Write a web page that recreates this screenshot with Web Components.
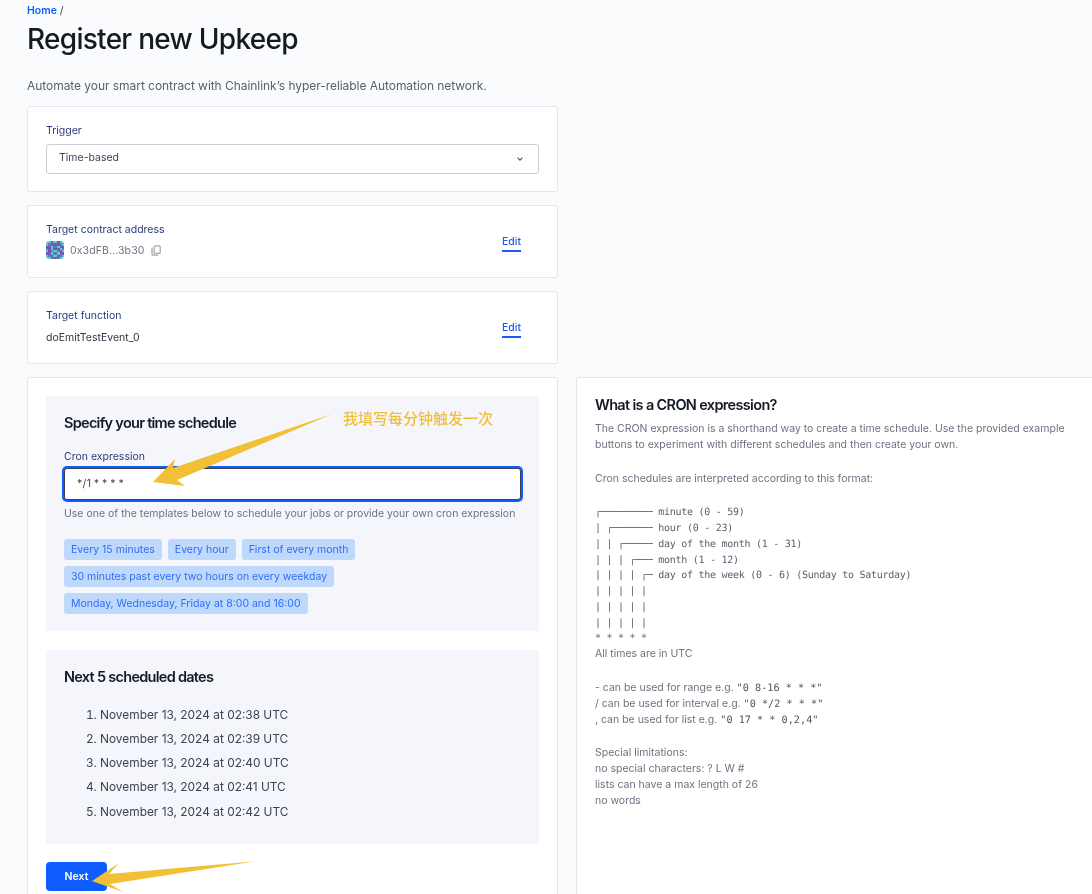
<!DOCTYPE html>
<html lang="en">
<head>
<meta charset="utf-8">
<title>Register new Upkeep</title>
<style>
html,body{margin:0;padding:0;height:894px;overflow:hidden;background:#fafbfd;}
body{font-family:Inter,"Liberation Sans",sans-serif;color:#141a24;position:relative;}
</style>
</head>
<body>
<upkeep-page></upkeep-page>
<note-overlay></note-overlay>
<script>
function def(name, css, html, setup){
  customElements.define(name, class extends HTMLElement{
    constructor(){super();const r=this.attachShadow({mode:'open'});r.innerHTML='<style>'+css+'</style>'+html;}
    connectedCallback(){ if(setup) setup(this); }
  });
}
def('ui-card',`:host{display:block;background:#fff;border:1px solid #e3e6ed;border-radius:3px;padding:17px 18px 17px;box-sizing:border-box}`,`<slot></slot>`);
def('field-label',`:host{display:block;font-size:10.5px;line-height:14px;color:#2b3a78}`,`<slot></slot>`);
def('select-box',`:host{display:flex;align-items:center;justify-content:space-between;height:30px;box-sizing:border-box;margin-top:6px;padding:0 12px 3px;background:#fff;border:1px solid #c9ced9;border-radius:3px;font-size:10.5px;color:#3c4350}
svg{display:block;margin:3px 3px 0 0}`,`<slot></slot><svg width="6" height="4" viewBox="0 0 6 4" fill="none" stroke="#4a5160" stroke-width="1.1"><path d="M.6.6 3 3.1 5.4.6"/></svg>`);
def('edit-row',`:host{display:flex;align-items:center;justify-content:space-between}
a{font-size:10.5px;font-weight:500;line-height:14px;color:#1a5cf5;border-bottom:2px solid #1a5cf5;padding-bottom:1px;margin-right:18px;margin-top:5px}`,`<div><slot></slot></div><a>Edit</a>`);
def('block-avatar',`:host{display:block;width:18px;height:18px}
svg{display:block;border-radius:3px}`,`<svg width="18" height="18" viewBox="0 0 8 8" shape-rendering="crispEdges"></svg>`,el=>{
  const rows=['ttpttptt','tbppppbt','pptbbtpp','bptppptb','tpbttbpt','pptbbtpp','tbpttpbt','ttbppbtt'];
  const c={t:'#5ccbc9',p:'#7355bb',b:'#4a86b8'};
  el.shadowRoot.querySelector('svg').innerHTML=rows.map((r,y)=>[...r].map((k,x)=>`<rect x="${x}" y="${y}" width="1" height="1" fill="${c[k]}"/>`).join('')).join('');
});
def('address-row',`:host{display:flex;align-items:center;margin-top:4px;height:18px;font-size:10.5px;letter-spacing:.1px;color:#6b7280}
span{margin-left:6px}svg{margin-left:7px;display:block}`,`<block-avatar></block-avatar><span><slot></slot></span><svg width="10" height="11" viewBox="0 0 10 11" fill="none" stroke="#a3a8b2" stroke-width="1.3"><rect x="3.2" y=".8" width="6" height="7.6" rx="1"/><path d="M1 2.6V9c0 .7.5 1.2 1.2 1.2h5"/></svg>`);
def('fn-value',`:host{display:block;margin-top:8px;font-size:10.5px;line-height:14px;color:#2f3540}`,`<slot></slot>`);
def('cron-input',`:host{display:block;height:32px;box-sizing:border-box;margin-top:4px;background:#fff;border:1px solid #3c4350;border-radius:3px;box-shadow:0 0 0 2px #0f5cff;padding:0 12px;font-size:10.5px;line-height:29px;color:#3c4350;letter-spacing:.3px;word-spacing:-.6px}`,`<slot></slot>`);
def('time-chip',`:host{display:inline-flex;align-items:center;height:21px;padding:0 7px;background:#bfd9fd;border-radius:3px;font-size:10.5px;color:#2f6df6;white-space:nowrap}`,`<slot></slot>`);
def('chip-list',`:host{display:flex;flex-wrap:wrap;gap:6px;margin-top:18px;width:300px}`,`<slot></slot>`);
def('inner-panel',`:host{display:block;background:#f5f6fb;padding:18px;box-sizing:border-box}
h3{margin:0;font-size:14.5px;line-height:18px;font-weight:600;letter-spacing:-.72px;color:#141a24}`,`<h3></h3><slot></slot>`,el=>{el.shadowRoot.querySelector('h3').textContent=el.getAttribute('heading');});
def('date-list',`:host{display:block}ol{margin:17px 0 0;padding:0 0 0 36px;font-size:11.9px;color:#3c4350}
li{height:24.15px;line-height:24px}`,`<ol></ol>`,el=>{
  el.shadowRoot.querySelector('ol').innerHTML=[38,39,40,41,42].map(m=>`<li>November 13, 2024 at 02:${m} UTC</li>`).join('');
});
def('primary-button',`:host{display:flex;align-items:center;justify-content:center;width:61px;height:29px;background:#0f5cff;border-radius:4px;color:#fff;font-size:10.5px;font-weight:600}`,`<slot></slot>`);
def('cron-help',`:host{display:block;font-size:10.5px;line-height:15.8px;color:#6b7280}
h2{margin:0 0 6px;font-size:14.5px;line-height:20px;font-weight:600;letter-spacing:-.66px;color:#141a24}
p{margin:0}pre{margin:1px 0 -1px;font-family:"DejaVu Sans Mono","Liberation Mono",monospace;font-size:10px;letter-spacing:-.27px;line-height:15.75px;color:#5b616c;text-rendering:geometricPrecision}
code{font-family:"DejaVu Sans Mono","Liberation Mono",monospace;font-size:10.2px;line-height:0;color:#4f5560;text-rendering:geometricPrecision}
.gap{height:18px}`,`<h2>What is a CRON expression?</h2>
<p>The CRON expression is a shorthand way to create a time schedule. Use the provided example buttons to experiment with different schedules and then create your own.</p>
<div class="gap"></div>
<p>Cron schedules are interpreted according to this format:</p>
<div class="gap"></div>
<pre>┌───────── minute (0 - 59)
| ┌─────── hour (0 - 23)
| | ┌───── day of the month (1 - 31)
| | | ┌─── month (1 - 12)
| | | | ┌─ day of the week (0 - 6) (Sunday to Saturday)
| | | | |
| | | | |
| | | | |
* * * * *</pre>
<p>All times are in UTC</p>
<div class="gap"></div>
<p>- can be used for range e.g. <code>"0 8-16 * * *"</code></p>
<p>/ can be used for interval e.g. <code>"0 */2 * * *"</code></p>
<p>, can be used for list e.g. <code>"0 17 * * 0,2,4"</code></p>
<div class="gap"></div>
<p>Special limitations:</p>
<p>no special characters: ? L W #</p>
<p>lists can have a max length of 26</p>
<p>no words</p>`);
def('upkeep-page',`:host{display:block;padding:4px 0 0 27px;box-sizing:border-box;height:894px;overflow:hidden;will-change:transform}
.crumb{font-size:10.5px;line-height:14px;color:#3c4350}.crumb b{color:#0f5cff;font-weight:600}
h1{margin:2px 0 0;font-size:28px;line-height:38px;font-weight:500;letter-spacing:-.72px;color:#141a24}
.lead{margin:18px 0 0;font-size:12px;line-height:20px;color:#596070;letter-spacing:-.05px}
.stack{display:grid;grid-template-columns:531px 1fr;column-gap:18px;row-gap:13px;margin-top:10px;align-items:start}
.c1{grid-column:1}
.tall{height:640px;padding-top:18px}
.right{grid-column:2;margin-right:-10px;padding-top:17px}
.help{margin-top:7px;font-size:10.5px;line-height:14px;color:#6b7280;white-space:nowrap}
inner-panel.one{height:235px}
inner-panel.two{height:194px;margin-top:19px}
.lbl{margin-top:18px}
primary-button{margin-top:18px}`,`
<div class="crumb"><b>Home</b> /</div>
<h1>Register new Upkeep</h1>
<p class="lead">Automate your smart contract with Chainlink’s hyper-reliable Automation network.</p>
<div class="stack">
  <ui-card class="c1"><field-label>Trigger</field-label><select-box>Time-based</select-box></ui-card>
  <ui-card class="c1" style="height:73px"><edit-row><div><field-label>Target contract address</field-label><address-row>0x3dFB...3b30</address-row></div></edit-row></ui-card>
  <ui-card class="c1" style="height:73px"><edit-row><div><field-label>Target function</field-label><fn-value>doEmitTestEvent_0</fn-value></div></edit-row></ui-card>
  <ui-card class="c1 tall">
    <inner-panel class="one" heading="Specify your time schedule">
      <field-label class="lbl">Cron expression</field-label>
      <cron-input>*/1 * * * *</cron-input>
      <div class="help">Use one of the templates below to schedule your jobs or provide your own cron expression</div>
      <chip-list><time-chip>Every 15 minutes</time-chip><time-chip>Every hour</time-chip><time-chip>First of every month</time-chip><time-chip>30 minutes past every two hours on every weekday</time-chip><time-chip>Monday, Wednesday, Friday at 8:00 and 16:00</time-chip></chip-list>
    </inner-panel>
    <inner-panel class="two" heading="Next 5 scheduled dates"><date-list></date-list></inner-panel>
    <primary-button>Next</primary-button>
  </ui-card>
  <ui-card class="right tall" style="grid-row:4"><cron-help></cron-help></ui-card>
</div>`);
def('note-overlay',`:host{position:absolute;inset:0;display:block;pointer-events:none}
svg{position:absolute;left:0;top:0}
span{position:absolute;left:343px;top:408px;font-family:"Noto Sans CJK SC",sans-serif;font-size:15px;line-height:20px;font-weight:500;color:#f2c037;white-space:nowrap}`,
`<svg width="1092" height="894" viewBox="0 0 1092 894"><polygon fill="#f2c037" points="332,414 173,468 175,459 153,482 185,486 177,480"/><polygon fill="#f2c037" points="258,861 109,874 119,863 92,881 123,892 110,884"/></svg><span>我填写每分钟触发一次</span>`);
</script>
</body>
</html>
